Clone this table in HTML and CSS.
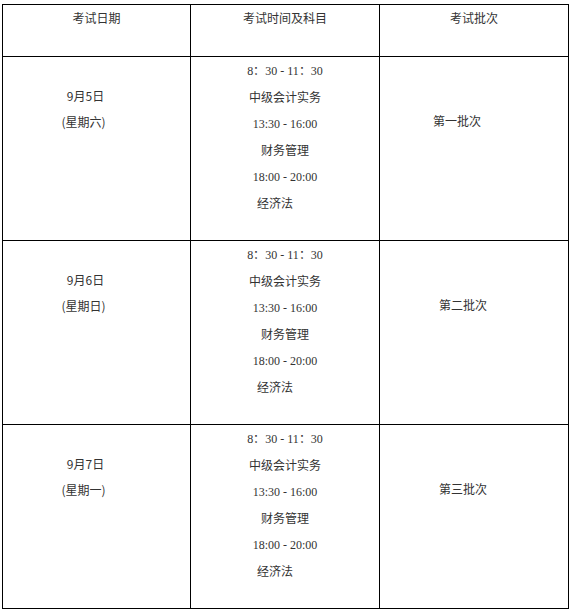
FILE: index.html
```html
<!DOCTYPE html>
<html lang="zh-CN">
<head>
<meta charset="utf-8">
<title>考试安排</title>
<link rel="stylesheet" href="styles.css">
</head>
<body>
<table class="schedule">
  <colgroup>
    <col class="c-date">
    <col class="c-time">
    <col class="c-batch">
  </colgroup>
  <thead>
    <tr class="head-row">
      <th>考试日期</th>
      <th>考试时间及科目</th>
      <th>考试批次</th>
    </tr>
  </thead>
  <tbody>
    <tr class="body-row">
      <td class="date"><p>9月5日</p><p class="week">(星期六)</p></td>
      <td class="time">
        <p class="num">8：30 - 11：30</p>
        <p>中级会计实务</p>
        <p class="num">13:30 - 16:00</p>
        <p>财务管理</p>
        <p class="num">18:00 - 20:00</p>
        <p class="last">经济法</p>
      </td>
      <td class="batch"><p class="first">第一批次</p></td>
    </tr>
    <tr class="body-row">
      <td class="date"><p>9月6日</p><p class="week">(星期日)</p></td>
      <td class="time">
        <p class="num">8：30 - 11：30</p>
        <p>中级会计实务</p>
        <p class="num">13:30 - 16:00</p>
        <p>财务管理</p>
        <p class="num">18:00 - 20:00</p>
        <p class="last">经济法</p>
      </td>
      <td class="batch"><p>第二批次</p></td>
    </tr>
    <tr class="body-row">
      <td class="date"><p>9月7日</p><p class="week">(星期一)</p></td>
      <td class="time">
        <p class="num">8：30 - 11：30</p>
        <p>中级会计实务</p>
        <p class="num">13:30 - 16:00</p>
        <p>财务管理</p>
        <p class="num">18:00 - 20:00</p>
        <p class="last">经济法</p>
      </td>
      <td class="batch"><p>第三批次</p></td>
    </tr>
  </tbody>
</table>
</body>
</html>
```
FILE: styles.css
```css
html, body {
  margin: 0;
  padding: 0;
  background: #ffffff;
}
body {
  padding: 4px 0 0 2px;
  font-family: "Noto Sans CJK SC", "Noto Sans", sans-serif;
  font-size: 12px;
  color: #333333;
}
.schedule {
  border-collapse: collapse;
  table-layout: fixed;
  width: 566px;
}
.c-date { width: 188px; }
.c-time { width: 189px; }
.c-batch { width: 189px; }
.schedule th,
.schedule td {
  border: 1px solid #000000;
  text-align: center;
  vertical-align: top;
  font-weight: normal;
  padding: 0;
}
.schedule p {
  margin: 0;
  line-height: 26.4px;
}
.head-row {
  height: 52px;
}
.head-row th {
  padding-top: 0;
  line-height: 26.4px;
}
.body-row {
  height: 184px;
}
.date {
  padding-top: 26px !important;
  padding-right: 22px !important;
}
.date .week {
  padding-right: 4px;
}
.time {
  padding-top: 1px !important;
}
.num {
  font-family: "Liberation Serif", "Times New Roman", serif;
}
.last {
  padding-right: 20px;
}
.batch {
  padding-top: 51px !important;
  padding-right: 22px !important;
}
.batch .first {
  padding-right: 12px;
}
```
